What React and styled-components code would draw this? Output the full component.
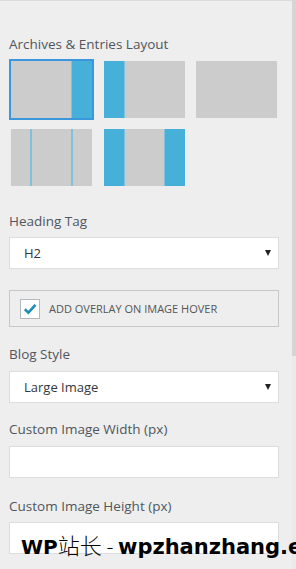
import React from 'react'
import styled, { createGlobalStyle } from 'styled-components'

const GlobalStyle = createGlobalStyle`
  html, body {
    margin: 0;
    padding: 0;
    overflow: hidden;
    background: #eeeeee;
  }
  body {
    font-family: "Open Sans", "Noto Sans", sans-serif;
  }
`

const Page = styled.div`
  position: relative;
  display: flex;
  width: 296px;
  height: 569px;
  overflow: hidden;
  background: #eeeeee;
`

const Panel = styled.div`
  flex: 1;
  display: flex;
  flex-direction: column;
`

const TopEdge = styled.div`
  display: flex;
  height: 1px;
  border-bottom: 1px solid #dcdcdc;
`

const TopTab = styled.div`
  width: 44px;
  border-right: 1px solid #cfcfcf;
`

const Content = styled.div`
  padding: 34px 13px 0 9px;
`

const Field = styled.div`
  margin-bottom: ${p => p.$mb || 19}px;
`

const Label = styled.div`
  font-size: 13.5px;
  line-height: 18px;
  color: #4f565d;
  margin-bottom: ${p => p.$mb || 7}px;
`

const LayoutGrid = styled.div`
  display: grid;
  grid-template-columns: repeat(3, 85px);
  column-gap: 7.5px;
  row-gap: 7px;
`

const LayoutItem = styled.div`
  width: 81px;
  height: 57px;
  border: 2px solid ${p => (p.$selected ? '#3a97db' : 'transparent')};
  display: flex;
`

const Segment = styled.div`
  width: ${p => p.$w}px;
  flex: none;
  background: ${p => ({ g: '#cccccc', b: '#47b0d9', l: '#7fc0da' })[p.$c]};
`

const SelectBox = styled.div`
  display: flex;
  align-items: center;
  justify-content: space-between;
  height: 30px;
  padding: 0 7px 0 14px;
  background: #fff;
  border: 1px solid #dddddd;
  font-size: 13px;
  color: #32373c;
`

const Arrow = styled.span`
  width: 0;
  height: 0;
  border-left: 3.5px solid transparent;
  border-right: 3.5px solid transparent;
  border-top: 6px solid #222;
`

const InputBox = styled.div`
  height: 30px;
  background: #fff;
  border: 1px solid #dddddd;
`

const CheckRow = styled.div`
  display: flex;
  align-items: center;
  gap: 9px;
  height: 35px;
  padding: 0 10px;
  border: 1px solid #c8c8c8;
  margin-top: 2px;
  font-size: 11px;
  color: #555;
  text-transform: uppercase;
`

const CheckBox = styled.div`
  width: 18px;
  height: 18px;
  background: #fff;
  border: 1px solid #b4b9be;
  display: flex;
  align-items: center;
  justify-content: center;
`

const Scrollbar = styled.div`
  width: 5px;
  background: #eaeaea;
`

const ScrollThumb = styled.div`
  height: 356px;
  background: #d5d5d5;
`

const Watermark = styled.div`
  position: absolute;
  left: 21px;
  top: 533px;
  white-space: nowrap;
  font-family: "DejaVu Sans", "Noto Sans CJK SC", sans-serif;
  font-size: 21px;
  line-height: 22px;
  font-weight: bold;
  color: #000;
`

const Mark = styled.span`
  font-size: ${p => p.$size}px;
  ${p => p.$light && 'font-family: "Noto Sans CJK SC", sans-serif; font-weight: 300;'}
`

const layouts = [
  { selected: true, parts: [['g', 60], ['l', 1], ['b', 20]] },
  { parts: [['b', 20], ['l', 1], ['g', 60]] },
  { parts: [['g', 81]] },
  { parts: [['g', 19], ['l', 2], ['g', 39], ['l', 2], ['g', 19]] },
  { parts: [['b', 20], ['l', 1], ['g', 39], ['l', 1], ['b', 20]] },
]

const Check = () => (
  <svg width="16" height="16" viewBox="0 0 16 16">
    <path d="M2.8 8.2 L6.4 11.6 L13.4 3.8" fill="none" stroke="#1e8cbe" strokeWidth="2.6" />
  </svg>
)

export default function App() {
  return (
    <Page>
      <GlobalStyle />
      <Panel>
        <TopEdge>
          <TopTab />
        </TopEdge>
        <Content>
          <Field $mb={24}>
            <Label $mb={6}>Archives &amp; Entries Layout</Label>
            <LayoutGrid>
              {layouts.map((l, i) => (
                <LayoutItem key={i} $selected={l.selected}>
                  {l.parts.map(([c, w], j) => (
                    <Segment key={j} $c={c} $w={w} />
                  ))}
                </LayoutItem>
              ))}
            </LayoutGrid>
          </Field>

          <Field $mb={21}>
            <Label>Heading Tag</Label>
            <SelectBox>
              <span>H2</span>
              <Arrow />
            </SelectBox>
          </Field>

          <Field $mb={18}>
            <CheckRow>
              <CheckBox>
                <Check />
              </CheckBox>
              <span>Add overlay on image hover</span>
            </CheckRow>
          </Field>

          <Field $mb={17}>
            <Label $mb={8}>Blog Style</Label>
            <SelectBox>
              <span>Large Image</span>
              <Arrow />
            </SelectBox>
          </Field>

          <Field>
            <Label $mb={8}>Custom Image Width (px)</Label>
            <InputBox />
          </Field>

          <Field>
            <Label>Custom Image Height (px)</Label>
            <InputBox />
          </Field>
        </Content>
      </Panel>
      <Scrollbar>
        <ScrollThumb />
      </Scrollbar>
      <Watermark>
        <Mark $size={20}>WP</Mark>
        <Mark $size={22} $light>站长</Mark>
        <Mark $size={21} $light> - </Mark>
        wpzhanzhang.eeyy.com
      </Watermark>
    </Page>
  )
}
